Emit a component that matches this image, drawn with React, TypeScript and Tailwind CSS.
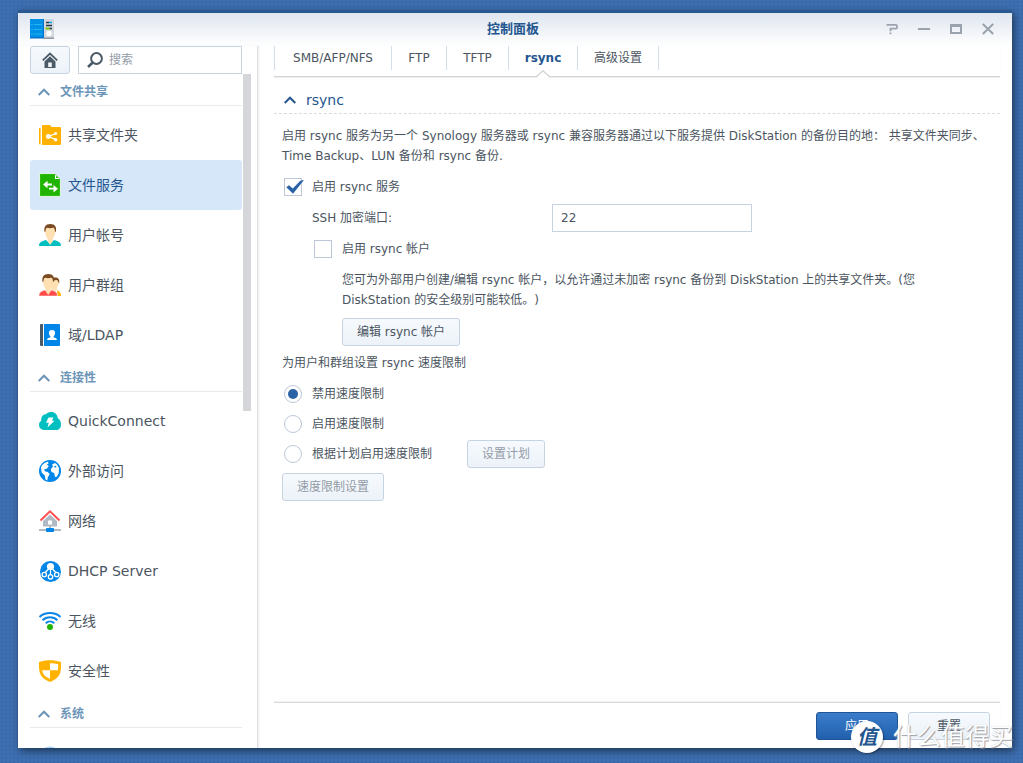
import React from 'react';

interface NavItem {
  label: string;
  icon: React.ReactNode;
  active?: boolean;
}

interface NavGroup {
  title: string;
  items: NavItem[];
}

const Icon: React.FC<{ children: React.ReactNode }> = ({ children }) => (
  <svg viewBox="0 0 24 24" className="w-6 h-6 shrink-0" aria-hidden="true">
    {children}
  </svg>
);

const groups: NavGroup[] = [
  {
    title: '文件共享',
    items: [
      {
        label: '共享文件夹',
        icon: (
          <Icon>
            <path fill="#ffb300" d="M1 5h1.6v16.5H2a1 1 0 0 1-1-1zM4 3a1 1 0 0 1 1-1h7l1.5 2H22a1 1 0 0 1 1 1v16a1 1 0 0 1-1 1H4z" />
            <path stroke="#fff" strokeWidth="1.3" fill="none" d="M18 10.5l-7.500 3 7.500 3.200" />
            <circle cx="10.300" cy="13.500" r="2.400" fill="#fff" />
            <circle cx="17.600" cy="10.500" r="1.500" fill="#fff" />
            <circle cx="17.600" cy="16.700" r="1.700" fill="#fff" />
          </Icon>
        ),
      },
      {
        label: '文件服务',
        active: true,
        icon: (
          <Icon>
            <path fill="#1fb400" stroke="#fff" strokeWidth="0.800" d="M1.600.6h15.400l5.400 5.400v17.400H1.600z" />
            <path fill="#fff" d="M17 1.800v4.200h4.300l-.5-.9h-2.600V2.600z" />
            <path fill="#fff" d="M5 11.500l4.500-3.800v2.900h4.500v1.900H9.500v2.800zM20 15.700l-4.500 3.800v-2.900H11v-1.900h4.500v-2.800z" />
          </Icon>
        ),
      },
      {
        label: '用户帐号',
        icon: (
          <Icon>
            <path fill="#00bfc0" d="M1 23c0-3.500 2-4.400 7-6l4 4 4-4c5 1.600 7 2.500 7 6z" />
            <path fill="#ffe0b2" d="M7 5h10.400c.3 6-1 8.500-2.600 10.600v2.400L12.200 22 9.600 18v-2.400C8 13.500 6.700 11 7 5z" />
            <path fill="#7a4a21" d="M6.600 9C5.600 4 7.500 1 12.300 1s6.600 3 5.500 8l-.9-.6c0-2-.6-3.400-1.700-3.600-2 .7-4.600.5-6.200 0C8 5.400 7.500 6.600 7.500 8.400z" />
          </Icon>
        ),
      },
      {
        label: '用户群组',
        icon: (
          <Icon>
            <path fill="#ffe0b2" d="M15 6h6c.2 4.500-.8 7-2 8.500v2.500l-3 2-3-3z" />
            <path fill="#7a4a21" d="M15 5c3-1 7-.6 6.200 5l-.8-.5c-.2-1.500-.8-2.500-1.700-2.500l-3 .5z" />
            <path fill="#ffb300" d="M19 17.400c3 1 4 2.500 4 5.600h-3.500z" />
            <path fill="#ff4b4b" stroke="#fff" strokeWidth=".5" d="M1 23c0-3.500 1.500-4.600 6-6l3.200 3 3.200-3c4.500 1.400 6 2.500 6 6z" />
            <path fill="#ffe0b2" d="M5 5h10.400c.3 6-1 8.500-2.600 10.600v2.400L10.200 22 7.600 18v-2.400C6 13.500 4.700 11 5 5z" />
            <path fill="#7a4a21" d="M4.600 9C3.600 4 5.500 1 10.300 1s6.600 3 5.500 8l-.9-.6c0-2-.6-3.400-1.700-3.600-2 .7-4.600.5-6.200 0C6 5.400 5.500 6.600 5.500 8.400z" />
          </Icon>
        ),
      },
      {
        label: '域/LDAP',
        icon: (
          <Icon>
            <path fill="#4b5a67" d="M3 1h2v22H3a1 1 0 0 1-1-1V2a1 1 0 0 1 1-1z" />
            <path fill="#0086e8" d="M6 1h15a1 1 0 0 1 1 1v20a1 1 0 0 1-1 1H6z" />
            <path fill="#fff" d="M14 7c2.200 0 3.200 1.200 3 3.400-.1 1.400-.8 2.300-1.500 3v.8c2 .6 3.500 1 3.500 2.800H9c0-1.800 1.500-2.200 3.500-2.800v-.8c-.7-.7-1.400-1.600-1.500-3C10.800 8.200 11.800 7 14 7z" />
          </Icon>
        ),
      },
    ],
  },
  {
    title: '连接性',
    items: [
      {
        label: 'QuickConnect',
        icon: (
          <Icon>
            <path fill="#00bfc0" d="M6 21a5 5 0 0 1-5-5c0-2.300 1-3.500 2.300-4.200C2.800 8 5 5.300 8 5.300 9.300 3.700 11 3 13 3c4 0 6.500 2.500 6.800 6.300C22 10.500 23 12.800 23 15.500 23 19 21 21 18 21z" />
            <path fill="#fff" d="M10.500 8.500h5l-1.500 3.300h2.500L9.500 18.500l1.300-4.800H8z" />
          </Icon>
        ),
      },
      {
        label: '外部访问',
        icon: (
          <Icon>
            <circle cx="12" cy="12" r="11" fill="#0086e8" />
            <path fill="#fff" d="M3 8C4.500 5 7 3 10 2.700l.6 1.800-1.800 1 2 1.500-2 2.700-2.500.5.400 2 3 .9 2 1.900-1.700 3-.8 3.400-1.700-.8-.7-4L3.600 13.500zM14 5.500l3-1.500c2 1.200 3.500 3 4 5.300l-.3 5-2 3.500-1.700.3-.8-4-2.700-1-.7-3 2.200-2.300z" />
            <path fill="#0086e8" d="M16 7.500l1.800-.8.700 1.300-1.500.8z" />
          </Icon>
        ),
      },
      {
        label: '网络',
        icon: (
          <Icon>
            <path fill="#b0bac4" d="M12 5.500l7 6.500v5.500h-6V20h10v2H1v-2h10v-2.500H5V12z" />
            <path fill="#fff" d="M10 11.500h4v4h-4z" />
            <path fill="none" stroke="#ff4f52" strokeWidth="2" d="M2.500 11.500L12 2.300l9.500 9.200" />
            <rect x="8" y="19" width="8" height="4" rx=".8" fill="#0086e8" />
          </Icon>
        ),
      },
      {
        label: 'DHCP Server',
        icon: (
          <Icon>
            <circle cx="12.500" cy="12.500" r="10.500" fill="#0086e8" />
            <path stroke="#fff" strokeWidth="1.300" fill="none" d="M12.500 8v8M11 9.500l-4.300 4.500M14 9.500l4.300 4.500" />
            <circle cx="12.500" cy="7.500" r="3.600" fill="#fff" />
            <g fill="#0086e8" stroke="#fff" strokeWidth="1.300">
              <circle cx="6.300" cy="15.500" r="2.200" />
              <circle cx="18.700" cy="15.500" r="2.200" />
              <circle cx="12.500" cy="17.800" r="2.200" />
            </g>
          </Icon>
        ),
      },
      {
        label: '无线',
        icon: (
          <Icon>
            <g fill="none" stroke="#0d86e8" strokeWidth="2">
              <path d="M1.500 8C7 2.800 17 2.800 22.500 8" />
              <path d="M4.600 11.200c4-3.800 10.800-3.800 14.800 0" />
              <path d="M7.700 14.300c2.500-2.300 6.100-2.300 8.600 0" />
            </g>
            <circle cx="12" cy="18" r="3" fill="#1fb400" />
          </Icon>
        ),
      },
      {
        label: '安全性',
        icon: (
          <Icon>
            <path fill="#ffb300" d="M1 3c7-2.400 15-2.400 22 0 .2 6 0 10-2 13.500-2 3-5 4.700-9 6.500-4-1.800-7-3.500-9-6.500C1 13 .8 9 1 3z" />
            <path fill="#fff" d="M12 4.300c3 0 5.700.3 8.200 1l-.3 5.900H12zM4.200 11.200H12v8.500c-3-1.200-5-2.500-6.400-4.500-.8-1.200-1.200-2.500-1.400-4z" />
          </Icon>
        ),
      },
    ],
  },
  {
    title: '系统',
    items: [
      {
        label: '',
        icon: (
          <Icon>
            <circle cx="12" cy="12.500" r="11" fill="#a5d5f5" />
          </Icon>
        ),
      },
    ],
  },
];

const tabs = [
  { label: 'SMB/AFP/NFS', width: 'w-[117px]' },
  { label: 'FTP', width: 'w-[55px]' },
  { label: 'TFTP', width: 'w-[62px]' },
  { label: 'rsync', width: 'w-[69px]', active: true },
  { label: '高级设置', width: 'w-[81px]' },
];

const speedModes = ['禁用速度限制', '启用速度限制', '根据计划启用速度限制'];

const Chevron: React.FC = () => (
  <svg viewBox="0 0 12 8" className="w-3 h-2 shrink-0" fill="none" stroke="currentColor" strokeWidth="2" aria-hidden="true">
    <path d="M.7 7L6 1.700 11.300 7" />
  </svg>
);

const buttonClass =
  'h-7 px-3.5 border border-[#c6d3e0] rounded-[3px] bg-linear-to-b from-[#f6fafe] to-[#ecf2f8] whitespace-nowrap disabled:text-[#949ca8]';

const CheckBox: React.FC<{ label: string; defaultChecked?: boolean }> = ({ label, defaultChecked }) => (
  <label className="h-7 flex items-center gap-2.5 pl-0.5">
    <span className="relative flex">
      <input
        type="checkbox"
        defaultChecked={defaultChecked}
        className="peer appearance-none w-[18px] h-[18px] border border-[#bcc8d8] bg-white"
      />
      <svg viewBox="0 0 20 18" className="absolute left-0 top-0 w-5 h-[18px] hidden peer-checked:block pointer-events-none" aria-hidden="true">
        <path fill="#2a62a6" d="M2.300 9.300L5 7.200l3.800 3.300L16.300 2.800l3.700-.8L9 15.800z" />
      </svg>
    </span>
    {label}
  </label>
);

const TitleBar: React.FC = () => (
  <header className="h-[33px] shrink-0 px-3 pb-px flex items-center bg-linear-to-b from-[#dfe6ef] to-white">
    <div className="flex-1">
      <svg viewBox="0 0 24 20" className="w-6 h-5" aria-hidden="true">
        <path fill="#0090e8" d="M0 0h14v19H0z" />
        <path fill="#0a72c8" d="M0 18h14v1.500H0zM13 0h1v19h-1z" />
        <path stroke="#20b8ee" d="M1 5.500h2M4 5.500h8M1 10.500h2M4 10.500h8M1 15h2M4 15h8" />
        <path fill="#d3d8de" d="M14 0h10v19H14z" />
        <path fill="#9199a2" d="M14 18.500h10V20H14z" />
        <path stroke="#2d3a45" strokeWidth="1.500" d="M16 3.500h3M16 6.500h6" />
        <path stroke="#00a4e8" strokeWidth="1.500" d="M19 3.500h3" />
        <path stroke="#7bc800" strokeWidth="2" d="M15.500 9.500h4" />
        <path stroke="#2d3a45" strokeWidth="1.500" d="M19.500 9.500h2.500" />
        <circle cx="19" cy="14.500" r="2.700" fill="#fff" />
      </svg>
    </div>
    <h1 className="text-[13px] font-bold text-[#24568f]">控制面板</h1>
    <div className="flex-1 flex justify-end gap-4 text-[#9aa2ad] pr-1">
      <button aria-label="帮助" className="w-4 h-4 flex items-center justify-center">
        <svg viewBox="0 0 12 12" className="w-3 h-3" fill="none" stroke="currentColor" strokeWidth="1.800">
          <path d="M.5 1.800h9.300q1.200 0 1.200 1.200v1.500q0 1.200-1.200 1.200H4.500v2.500M4.500 9.500v1.700" />
        </svg>
      </button>
      <button aria-label="最小化" className="w-4 h-4 flex items-center justify-center">
        <svg viewBox="0 0 12 12" className="w-3 h-3" stroke="currentColor" strokeWidth="2">
          <path d="M0 6h12" />
        </svg>
      </button>
      <button aria-label="最大化" className="w-4 h-4 flex items-center justify-center">
        <svg viewBox="0 0 12 12" className="w-3 h-3" fill="none" stroke="currentColor">
          <path strokeWidth="2" d="M1 2h10v8H1z" />
          <path strokeWidth="3" d="M0 2.500h12" />
        </svg>
      </button>
      <button aria-label="关闭" className="w-4 h-4 flex items-center justify-center">
        <svg viewBox="0 0 12 12" className="w-3 h-3" stroke="currentColor" strokeWidth="2">
          <path d="M.8 1l10.400 10M11.200 1L.8 11" />
        </svg>
      </button>
    </div>
  </header>
);

const Sidebar: React.FC = () => (
  <aside className="w-[240px] shrink-0 flex flex-col pl-3 border-r border-[#dcdfe3] shadow-[1px_0_2px_rgba(0,0,0,0.08)]">
    <div className="flex gap-2 pr-[15px]">
      <button aria-label="主页" className="w-10 h-7 shrink-0 flex items-center justify-center border border-[#c6d3e0] rounded-[3px] bg-linear-to-b from-[#f6fafe] to-[#ecf2f8]">
        <svg viewBox="0 0 16 16" className="w-4 h-4" aria-hidden="true">
          <path fill="none" stroke="#4b5a67" strokeWidth="1.800" d="M.8 8.400L8 1.500l7.200 6.900" />
          <path fill="#4b5a67" fillRule="evenodd" d="M8 4.300l5.500 5.300V16h-11V9.600zM6.200 10.500V15h3.600v-4.500z" />
        </svg>
      </button>
      <label className="flex-1 min-w-0 h-7 flex items-center gap-1.5 pl-2 border border-[#c6d3e0] bg-white">
        <svg viewBox="0 0 16 16" className="w-4 h-4 shrink-0" fill="none" stroke="#4b5a67" aria-hidden="true">
          <circle cx="9.500" cy="6.500" r="5.400" strokeWidth="2" />
          <path strokeWidth="2.600" d="M5.500 10.800L1 15" />
        </svg>
        <input type="text" placeholder="搜索" aria-label="搜索" className="flex-1 min-w-0 outline-none placeholder:text-[#949ca8]" />
      </label>
    </div>
    <div className="flex-1 min-h-0 flex">
      <nav className="flex-1 min-w-0 overflow-hidden">
        {groups.map((group) => (
          <section key={group.title}>
            <h2 className="h-8 mb-1 pl-2 pt-1 flex items-center gap-2.5 border-b border-[#e8ebee] text-xs font-bold text-[#6c95b8]">
              <Chevron />
              {group.title}
            </h2>
            {group.items.map((item) => (
              <a
                key={item.label}
                href="#"
                className={
                  item.active
                    ? 'h-[50px] pl-2 flex items-center gap-1.5 text-sm rounded-[3px] bg-[#d6e7f9] text-[#24568f]'
                    : 'h-[50px] pl-2 flex items-center gap-1.5 text-sm rounded-[3px]'
                }
              >
                {item.icon}
                {item.label}
              </a>
            ))}
          </section>
        ))}
      </nav>
      <div className="w-2 ml-px mr-1.5">
        <div className="h-1/2 bg-[#d4d6d9]" />
      </div>
    </div>
  </aside>
);

const TabBar: React.FC = () => (
  <div className="h-[31px] shrink-0 border-b border-[#d0d3d6] shadow-[0_1px_1px_rgba(0,0,0,0.06)]">
    <div role="tablist" className="flex h-6 border-l border-[#d3deea]">
      {tabs.map(({ label, width, active }) => (
        <button
          key={label}
          role="tab"
          aria-selected={!!active}
          className={`${width} relative border-r border-[#d3deea] ${active ? 'font-bold text-[#24568f]' : ''}`}
        >
          {label}
          {active && (
            <svg viewBox="0 0 14 8" className="absolute left-1/2 top-6 -translate-x-1/2 w-[14px] h-2" aria-hidden="true">
              <path fill="#fff" d="M0 8l7-7 7 7z" />
              <path fill="none" stroke="#d0d3d6" strokeWidth="1.300" d="M0 7l7-6.300 7 6.300" />
            </svg>
          )}
        </button>
      ))}
    </div>
  </div>
);

const RsyncPanel: React.FC = () => (
  <div className="flex-1 min-h-0 overflow-hidden">
    <h2 className="h-[37px] pt-2.5 pl-2.5 flex items-center gap-2.5 text-sm text-[#24568f] border-b border-dashed border-[#d9dcdf]">
      <Chevron />
      rsync
    </h2>
    <div className="px-2 [text-spacing-trim:space-all]">
      <p className="mt-3 leading-5">
        启用 rsync 服务为另一个 Synology 服务器或 rsync 兼容服务器通过以下服务提供 DiskStation 的备份目的地： 共享文件夹同步、Time Backup、LUN 备份和 rsync 备份.
      </p>
      <div className="mt-[7px] flex flex-col gap-[3px]">
        <CheckBox label="启用 rsync 服务" defaultChecked />
        <div className="flex items-center pl-[30px]">
          <label htmlFor="ssh-port" className="w-60">SSH 加密端口:</label>
          <input id="ssh-port" type="text" defaultValue="22" className="w-[200px] h-7 px-2 border border-[#c6d3e0] bg-white outline-none" />
        </div>
        <div className="pl-[30px]">
          <CheckBox label="启用 rsync 帐户" />
        </div>
      </div>
      <div className="pl-[60px] pr-10 mt-[7px]">
        <p className="leading-5">
          您可为外部用户创建/编辑 rsync 帐户，以允许通过未加密 rsync 备份到 DiskStation 上的共享文件夹。(您 DiskStation 的安全级别可能较低。)
        </p>
        <button className={`${buttonClass} mt-2`}>编辑 rsync 帐户</button>
      </div>
      <fieldset className="mt-[7px]">
        <legend className="leading-5">为用户和群组设置 rsync 速度限制</legend>
        <div className="mt-[7px] flex flex-col gap-0.5">
          {speedModes.map((mode, index) => (
            <div key={mode} className="h-7 flex items-center">
              <label className="flex items-center gap-2.5 pl-0.5">
                <input
                  type="radio"
                  name="speed"
                  defaultChecked={index === 0}
                  className="appearance-none w-[18px] h-[18px] rounded-full border border-[#bcc8d8] bg-white flex items-center justify-center checked:before:block checked:before:w-2.5 checked:before:h-2.5 checked:before:rounded-full checked:before:bg-[#2a62a6]"
                />
                {mode}
              </label>
              {index === 2 && (
                <button disabled className={`${buttonClass} ml-[35px]`}>设置计划</button>
              )}
            </div>
          ))}
        </div>
      </fieldset>
      <button disabled className={`${buttonClass} mt-[5px]`}>速度限制设置</button>
    </div>
  </div>
);

const Watermark: React.FC = () => (
  <div className="absolute right-2.5 bottom-2.5 flex items-center gap-2.5 pointer-events-none">
    <div className="w-8 h-8 rounded-full bg-white flex items-center justify-center text-xl font-bold italic text-[#24568f] shadow-[1px_1px_2px_rgba(0,0,0,0.35)]">
      值
    </div>
    <span className="text-2xl leading-8 text-white [text-shadow:1px_1px_1px_#9a9ea5,0_0_1px_#c0c4ca]">什么值得买</span>
  </div>
);

const App: React.FC = () => (
  <div className="relative h-screen pt-2.5 pb-[15px] pl-[18px] pr-[11px] bg-[#3d6fb1] bg-[radial-gradient(#3a69aa_1px,transparent_1px)] bg-size-[4px_4px] font-['DejaVu_Sans','Noto_Sans_CJK_SC',sans-serif] text-xs text-[#4b5561]">
    <div className="h-full flex flex-col bg-white border-t-[3px] border-[#2a5890] shadow-[2px_3px_8px_rgba(0,0,0,0.5)] overflow-hidden">
      <TitleBar />
      <div className="flex-1 min-h-0 flex">
        <Sidebar />
        <main className="flex-1 min-w-0 flex flex-col pl-4 pr-3">
          <TabBar />
          <RsyncPanel />
          <footer className="h-[46px] shrink-0 flex justify-end items-start gap-2.5 pt-[9px] pr-2.5 border-t border-[#d6d9dc] shadow-[0_-1px_1px_rgba(0,0,0,0.05)]">
            <button className="w-[82px] h-7 border border-[#1f5596] rounded-[3px] bg-linear-to-b from-[#3b7dcb] to-[#2160ad] text-white">应用</button>
            <button className="w-[82px] h-7 border border-[#c6d3e0] rounded-[3px] bg-linear-to-b from-[#f6fafe] to-[#ecf2f8]">重置</button>
          </footer>
        </main>
      </div>
    </div>
    <Watermark />
  </div>
);

export default App;
